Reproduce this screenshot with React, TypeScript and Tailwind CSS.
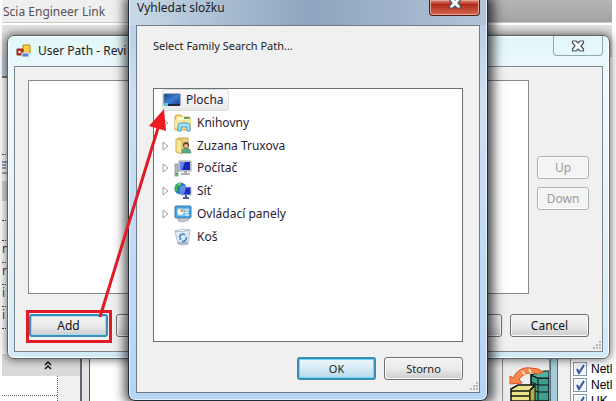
import React, { useState } from 'react';

const titles = "font-['Noto_Sans',sans-serif] text-xs text-[#1c1c1c]";

const buttonShape = 'h-[23px] rounded-[3px] text-xs leading-none text-[#111]';
const buttonFace = 'bg-linear-to-b from-[#f3f3f3] from-0% via-[#ebebeb] via-50% to-[#cdcdcd]';
const winButton = `${buttonShape} ${buttonFace} border border-[#707070] shadow-[inset_0_0_0_1px_#fafafa]`;
const focusedButton = `${buttonShape} ${buttonFace} border-2 border-[#3c8db5] shadow-[inset_0_0_0_1px_#9fdcf2]`;

const DesktopIcon = () => (
    <svg width="18" height="18" viewBox="0 0 18 18">
        <defs>
            <linearGradient id="screen" x1="0" y1="0" x2="1" y2="1">
                <stop offset="0" stopColor="#123f91" />
                <stop offset="0.5" stopColor="#3d82d2" />
                <stop offset="1" stopColor="#15398a" />
            </linearGradient>
        </defs>
        <path d="M1 3h16v11H1z" fill="url(#screen)" stroke="#4c6d8d" />
        <path d="M1 13h16v2H1z" fill="#1d2c44" />
        <path d="M1 12h4v3H1z" fill="#5fc4dc" />
    </svg>
);

const LibraryIcon = () => (
    <svg width="18" height="18" viewBox="0 0 18 18">
        <path d="M1 3l1-2h5l1 2h8v13H1z" fill="#f2dc83" stroke="#c9a94a" />
        <path d="M3 3h12v3H3z" fill="#fdf6cf" />
        <path d="M10 4h5" stroke="#63a846" strokeWidth="2" />
        <path d="M1 6h16v8H1z" fill="#f7e69c" />
        <path d="M4 17v-5q0-3 3-3h6q3 0 3 3v5h-3v-4H7v4z" fill="#a8e1f7" stroke="#3f9fcb" />
    </svg>
);

const UserIcon = () => (
    <svg width="18" height="18" viewBox="0 0 18 18">
        <path d="M4 1h10v14H4z" fill="#efd277" stroke="#caa647" />
        <path d="M2 2l6 1v14l-6-2z" fill="#f8e798" stroke="#cfae4f" />
        <circle cx="12" cy="8" r="3" fill="#5d4632" />
        <circle cx="12" cy="9" r="2" fill="#e9b98d" />
        <path d="M8 16q0-5 4-5t5 5z" fill="#5ba68a" stroke="#3a8069" strokeWidth="0.6" />
    </svg>
);

const ComputerIcon = () => (
    <svg width="18" height="18" viewBox="0 0 18 18">
        <path d="M1 5h3v12H1z" fill="#b9bdc2" stroke="#7c8288" strokeWidth="0.7" />
        <path d="M1.500 14h2v2h-2z" fill="#3cae3a" />
        <path d="M5 2h12v10H5z" fill="#dfe3e8" stroke="#9298a3" />
        <path d="M6 3h10v8H6z" fill="#1527b8" />
        <path d="M6 3h5l-3 8H6z" fill="#6a86ea" />
        <path d="M10 12h3v2h3v2H7v-2h3z" fill="#a9aeb5" />
    </svg>
);

const NetworkIcon = () => (
    <svg width="18" height="18" viewBox="0 0 18 18">
        <circle cx="6.500" cy="6.500" r="6" fill="#2379c9" />
        <path d="M2 3q3-3 6-2l-2 3-3 1 1 3-2 2q-3-3 0-7zM8 4l4 1v4l-4 2z" fill="#45b649" />
        <path d="M4 2l3-1-1 2z" fill="#c8f2c8" />
        <path d="M7 5h10v8H7z" fill="#1830c4" stroke="#b7c5da" />
        <path d="M8 6h4l-2 6H8z" fill="#6789ee" />
        <path d="M11 13h2v2h2v2H9v-2h2z" fill="#4b5f92" />
    </svg>
);

const ControlPanelIcon = () => (
    <svg width="18" height="18" viewBox="0 0 18 18">
        <rect x="1" y="1" width="16" height="12" rx="1" fill="#4ba3dd" stroke="#3980b5" />
        <path d="M3 3h12v8H3z" fill="#7cc3ec" />
        <circle cx="6.500" cy="7" r="3" fill="#fff" />
        <path d="M6.500 7V4a3 3 0 0 1 3 3z" fill="#f29a38" />
        <path d="M11 5h4M11 7.500h3M11 10h4" stroke="#fff" />
        <path d="M4 14l10-1 1 2-6 2-5-1z" fill="#c7cbd0" stroke="#8d9298" strokeWidth="0.6" />
    </svg>
);

const BinIcon = () => (
    <svg width="18" height="18" viewBox="0 0 18 18">
        <path d="M1 3l15-1-2 14q-5 2-10 0z" fill="#e1eaf2" stroke="#a4b4c2" strokeWidth="0.8" />
        <path d="M1 3q7-3 15-1-7 3-15 1z" fill="#f8fbfd" stroke="#a4b4c2" strokeWidth="0.8" />
        <path d="M4 14h10v2q-5 1-10 0z" fill="#aab6c0" />
        <path d="M6 10a3 3 0 0 1 5-3M12 9a3 3 0 0 1-4 4M6 12l1-2" stroke="#3c86d2" strokeWidth="1.600" fill="none" />
    </svg>
);

const AppIcon = () => (
    <svg width="16" height="16" viewBox="0 0 16 16">
        <path d="M7 2h7v8H7z" fill="#f8cf3c" stroke="#b98a1c" />
        <path d="M1 6h6v6H1z" fill="#c73529" stroke="#8b2019" />
        <path d="M2.500 8h2v2h-2z" fill="#fff" />
        <path d="M6 10h7v4H6z" fill="#4e84dc" stroke="#e8eefb" />
    </svg>
);

const CloseGlyph = () => (
    <svg width="14" height="12" viewBox="0 0 14 12" className="shrink-0">
        <path
            d="M1.500 1H5l2 2 2-2h3.500v2L10 6l2.500 3v2H9L7 9l-2 2H1.500V9L4 6 1.500 3z"
            fill="#fff"
            stroke="#4b5261"
            strokeWidth="1.200"
            strokeLinejoin="round"
        />
    </svg>
);

const Grip = () => (
    <svg width="10" height="10" viewBox="0 0 10 10" fill="#b8b8b8">
        <path d="M7 0h2v2H7zM7 3h2v2H7zM4 3h2v2H4zM7 6h2v2H7zM4 6h2v2H4zM1 6h2v2H1z" />
    </svg>
);

const ExportIcon = () => (
    <svg width="40" height="34" viewBox="0 0 40 34" className="shrink-0">
        <path d="M22 8l7 3h11v23H22z" fill="#3f9d8e" stroke="#111" strokeWidth="1.500" />
        <path d="M22 8l13-4h5v7H29z" fill="#4fb3a3" stroke="#111" />
        <path d="M22 15l7 3h11M22 22l7 3h11M29 11v23" stroke="#111" fill="none" />
        <path d="M1 17V9l3 2Q10-1 22 1q8 0 12 4l-5 2q-11-4-19 5l3 4z" fill="#f7894f" stroke="#d9531e" />
        <path d="M13 4l4 5M20 2l2 4" stroke="#ffd9b8" strokeWidth="2" />
        <path d="M2 22l7-4h17l-5 5v11H2z" fill="#e9e48a" stroke="#111" strokeWidth="1.500" />
        <path d="M2 24h18M2 29h18" stroke="#111" strokeWidth="1.500" />
        <path d="M21 24l5-5v15h-5z" fill="#b5ad45" stroke="#111" />
    </svg>
);

const folders = [
    { name: 'Plocha', icon: <DesktopIcon />, root: true, children: true },
    { name: 'Knihovny', icon: <LibraryIcon />, children: true },
    { name: 'Zuzana Truxova', icon: <UserIcon />, children: true },
    { name: 'Počítač', icon: <ComputerIcon />, children: true },
    { name: 'Síť', icon: <NetworkIcon />, children: true },
    { name: 'Ovládací panely', icon: <ControlPanelIcon />, children: true },
    { name: 'Koš', icon: <BinIcon />, children: false },
];

const regions = ['Netl', 'Netl', 'UK'];

// The host application behind both windows
const Backdrop = () => (
    <div className="flex h-screen flex-col overflow-hidden pr-1 pl-0.5">
        <div className="flex h-[23px] shrink-0 border-b border-[#c8c8c8]">
            <div className="w-[127px] bg-[#efefef] pt-1 font-['Noto_Sans',sans-serif] text-xs text-[#5a5058]">
                <span className="pl-px whitespace-nowrap">Scia Engineer Link</span>
            </div>
            <div className="flex-1 bg-linear-to-b from-[#b5b5b5] to-[#a2a2a2]" />
        </div>
        <div className="h-[34px] shrink-0 border-t-2 border-white bg-linear-to-b from-[#e2e2e2] to-[#c9c9c9]" />
        <div className="mr-1 h-[21px] shrink-0 border-b-2 border-[#777] bg-[#bccbdc]" />

        <div className="flex min-h-0 flex-1">
            <div className="flex w-20 flex-col border-r-2 border-[#5d6873]">
                <div className="h-[76px] shrink-0" />
                <div className="h-[27px] border-t border-dotted border-[#444] pt-1">
                    <svg width="14" height="16" viewBox="0 0 14 16" fill="none" stroke="#34506e">
                        <path d="M-4 3h16v11H-4M0 6h4M0 9h4" />
                    </svg>
                </div>
                <div className="h-5 bg-[#d9d9d9]" />
                <div className="h-5 border-b border-dotted border-[#444]" />
                <div className="h-5 border-b border-dotted border-[#444]" />
                {['n', 'r', 'i', 'i'].map((letter, i) => (
                    <div key={i} className="h-[22px] overflow-hidden border-b border-dotted border-[#444] font-['Noto_Sans',sans-serif] text-xs text-[#5b3a63]">
                        {letter}
                    </div>
                ))}
                <div className="h-[25px]" />
                <div className="flex h-[22px] shrink-0 items-center justify-end bg-[#d9d9d9] pr-[27px]">
                    <svg width="9" height="9" viewBox="0 0 9 9" fill="none" stroke="#111" strokeWidth="1.500">
                        <path d="M1 4l3-3 3 3M1 8l3-3 3 3" />
                    </svg>
                </div>
                <div className="flex flex-1 bg-[#f0f0f0]">
                    <div className="w-14 border-r border-dotted border-[#666] bg-white">
                        <div className="h-5 border-b border-dotted border-[#666]" />
                    </div>
                </div>
            </div>
            <div className="w-2 border-r border-[#555] bg-[#e4e4e4]" />
            <div className="flex-1" />

            <div className="flex items-end">
                <div className="flex h-[44px] items-start bg-[#f0f0f0] pl-3">
                    <button
                        aria-label="Export"
                        className="flex h-[60px] w-12 items-start justify-end overflow-hidden rounded-sm border border-[#8c8c8c] bg-[#ececec] pt-[9px]"
                    >
                        <ExportIcon />
                    </button>
                    <div className="h-full w-2 border-x border-[#52707c] bg-[#a5cbd8]" />
                    <div className="h-full w-3 bg-[#f0f0f0]" />
                </div>
                <div className="flex h-[44px] w-[42px] flex-col gap-px overflow-hidden border-l border-[#999] bg-white pt-1 pl-0.5">
                    {regions.map((name, i) => (
                        <label key={i} className="flex h-[15px] shrink-0 items-center gap-1 font-['Liberation_Sans',sans-serif] text-xs text-black">
                            <span className="grid">
                                <input
                                    type="checkbox"
                                    defaultChecked
                                    className="col-start-1 row-start-1 size-[14px] appearance-none border border-[#8497aa] bg-[#eef1f5] shadow-[inset_0_0_0_1px_#fff]"
                                />
                                <svg width="14" height="14" viewBox="0 0 14 14" className="pointer-events-none col-start-1 row-start-1">
                                    <path d="M4 7l2 4 5-8" stroke="#36539c" strokeWidth="2" fill="none" />
                                </svg>
                            </span>
                            {name}
                        </label>
                    ))}
                </div>
            </div>
        </div>
    </div>
);

const UserPathWindow = () => (
    <section
        aria-label="User Path"
        className="absolute top-[35px] right-[6px] left-[7px] rounded-[7px] border border-[#59636b] bg-linear-to-b from-[#e0f6f8] from-0% via-[#f3fafc] via-15% to-[#d3e9f8] px-1.5 pb-1.5 font-['Noto_Sans',sans-serif] shadow-[0_0_8px_1px_rgba(0,0,0,0.55),inset_0_0_0_1px_#fbffff]"
    >
        <header className="flex h-[30px] items-start justify-between pl-0.5">
            <h1 className={`${titles} flex h-[30px] items-center gap-1.5 font-normal whitespace-nowrap`}>
                <AppIcon />
                User Path - Revi
            </h1>
            <button
                aria-label="Close"
                className="flex h-5 w-[50px] items-center justify-center rounded-b-[4px] border border-t-0 border-[#93a7b0] bg-[#e5f7f9]"
            >
                <CloseGlyph />
            </button>
        </header>

        <div className="border border-[#7b858d] bg-[#f0f0f0]">
            <div className="flex pt-[13px] pl-[13px]">
                <ul aria-label="Paths" className="h-[214px] flex-1 border border-[#828790] bg-white" />
                <div className="flex w-[73px] flex-col gap-2 pt-[76px] pr-[13px] pl-2">
                    {['Up', 'Down'].map((label) => (
                        <button
                            key={label}
                            disabled
                            className="h-[23px] rounded-[3px] border border-[#adb2b5] bg-[#f4f4f4] text-xs leading-none text-[#9a9a9a] shadow-[inset_0_0_0_1px_#fcfcfc]"
                        >
                            {label}
                        </button>
                    ))}
                </div>
            </div>
            <div className="flex justify-between pt-5 pr-[13px] pl-[14px]">
                <div className="flex gap-2">
                    <button className={`${focusedButton} w-[79px]`}>Add</button>
                    <button className={`${winButton} w-[79px]`} aria-label="Edit" />
                </div>
                <div className="flex gap-2">
                    <button className={`${winButton} w-[79px]`} aria-label="OK" />
                    <button className={`${winButton} w-[79px]`}>Cancel</button>
                </div>
            </div>
            <div className="flex h-[14px] items-end justify-end">
                <Grip />
            </div>
        </div>
    </section>
);

const BrowseDialog = () => {
    const [selected, setSelected] = useState('Plocha');

    return (
        <section
            aria-label="Vyhledat složku"
            className="absolute top-0 right-[128px] left-[128px] rounded-b-[7px] border border-t-0 border-[#1f2a36] bg-linear-to-b from-[#b4c8de] from-0% via-[#cfe0f2] via-25% to-[#b4d5f5] px-[7px] pb-[7px] font-['Noto_Sans',sans-serif] shadow-[1px_0_12px_4px_rgba(0,0,0,0.75),inset_0_0_0_1px_#e6f3fd]"
        >
            <header className="-mx-1.5 flex h-[25px] items-start justify-between bg-linear-to-r from-[#c9d9e8] from-0% via-[#8da5bf] via-50% to-[#b1c3d6] pr-1.5 pl-[7px]">
                <h2 className={`${titles} font-normal whitespace-nowrap`}>Vyhledat složku</h2>
                <button
                    aria-label="Zavřít"
                    className="flex h-4 w-[51px] items-end justify-center overflow-hidden rounded-b-[4px] border border-t-0 border-[#4e1c1a] bg-linear-to-b from-[#d98a7d] from-0% via-[#b3281a] via-30% to-[#d4684f] pb-1.5 shadow-[inset_0_0_0_1px_#e9a498]"
                >
                    <CloseGlyph />
                </button>
            </header>

            <div className="border border-[#6f7c88] bg-[#f0f0f0]">
                <div className="px-4">
                    <p className="h-[62px] pt-3 text-[11px] text-[#222]">Select Family Search Path...</p>
                    <div className="h-[254px] border border-[#6d6f75] bg-white">
                        <ul className="grid h-[159px] grid-rows-7 pl-2">
                            {folders.map((folder) => (
                                <li key={folder.name} className="flex items-center">
                                    {!folder.root && (
                                        <span className="w-[11px]">
                                            {folder.children && (
                                                <svg width="7" height="10" viewBox="0 0 7 10">
                                                    <path d="M1 1l5 4-5 4z" fill="#fff" stroke="#a0a0a0" />
                                                </svg>
                                            )}
                                        </span>
                                    )}
                                    <button
                                        onClick={() => setSelected(folder.name)}
                                        className={`flex h-[22px] items-center gap-[5px] rounded-[3px] border pr-1 text-xs whitespace-nowrap text-[#2b1a33] ${
                                            selected === folder.name
                                                ? 'border-[#dcdcdc] bg-linear-to-b from-[#fafafa] to-[#e9e9e9]'
                                                : 'border-transparent'
                                        }`}
                                    >
                                        {folder.icon}
                                        {folder.name}
                                    </button>
                                </li>
                            ))}
                        </ul>
                    </div>
                    <div className="flex justify-end gap-2 pt-[15px]">
                        <button className="h-[23px] w-[79px] rounded-[3px] border-2 border-[#3c8db5] bg-linear-to-b from-[#edf7fb] from-0% via-[#d5eaf4] via-50% to-[#b5d9ea] text-[11px] leading-none text-[#222] shadow-[inset_0_0_0_1px_#6fd8f8]">
                            OK
                        </button>
                        <button className={`${buttonFace} h-[23px] w-[79px] rounded-[3px] border border-[#707070] text-[11px] leading-none text-[#222] shadow-[inset_0_0_0_1px_#fafafa]`}>
                            Storno
                        </button>
                    </div>
                </div>
                <div className="flex h-3 items-end justify-end">
                    <Grip />
                </div>
            </div>
        </section>
    );
};

// Red frame around "Add" and the arrow pointing at the folder tree
const Callout = () => (
    <svg
        width="180"
        height="350"
        viewBox="0 0 180 350"
        className="pointer-events-none absolute top-0 left-0"
    >
        <path d="M27.500 311.500h83v30h-83z" fill="none" stroke="#e01b26" strokeWidth="3" />
        <path d="M100 317L158 128" stroke="#e01b26" strokeWidth="3" />
        <path d="M164 109l-15 17 17 5z" fill="#ed1c24" />
    </svg>
);

export default function App() {
    return (
        <main className="relative min-h-screen overflow-hidden bg-white">
            <Backdrop />
            <UserPathWindow />
            <BrowseDialog />
            <Callout />
        </main>
    );
}
